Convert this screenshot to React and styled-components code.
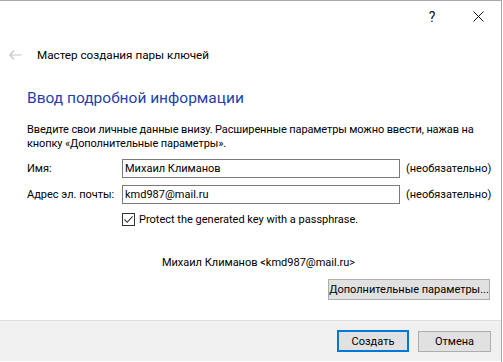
import React from "react";
import styled, { createGlobalStyle } from "styled-components";

const GlobalStyle = createGlobalStyle`
  * { box-sizing: border-box; }
  body {
    margin: 0;
    background: #ffffff;
    font-family: Roboto, "Liberation Sans", Arial, sans-serif;
    font-size: 11px;
    color: #000;
  }
`;

export default function App() {
  return (
    <>
      <GlobalStyle />
      <Window>
        <TitleBar>
          <CaptionButton>?</CaptionButton>
          <CaptionButton>
            <svg width="11" height="11" viewBox="0 0 11 11">
              <path d="M0.5 0.5 L10.5 10.5 M10.5 0.5 L0.5 10.5" stroke="#111" strokeWidth="1" fill="none" />
            </svg>
          </CaptionButton>
        </TitleBar>

        <HeaderRow>
          <BackIcon>
            <svg width="13" height="10" viewBox="0 0 13 10">
              <path d="M5 0.5 L0.8 5 L5 9.5 M0.8 5 H12.5" stroke="#c6c6c6" strokeWidth="1.2" fill="none" />
            </svg>
          </BackIcon>
          <WizardTitle>Мастер создания пары ключей</WizardTitle>
        </HeaderRow>

        <Content>
          <Heading>Ввод подробной информации</Heading>
          <Intro>
            Введите свои личные данные внизу. Расширенные параметры можно ввести, нажав на
            кнопку «Дополнительные параметры».
          </Intro>

          <FormGrid>
            <Label>Имя:</Label>
            <TextBox defaultValue="Михаил Климанов" />
            <Hint>(необязательно)</Hint>
            <Label>Адрес эл. почты:</Label>
            <TextBox defaultValue="kmd987@mail.ru" />
            <Hint>(необязательно)</Hint>
            <span />
            <CheckRow>
              <CheckBox>
                <svg width="11" height="11" viewBox="0 0 11 11">
                  <path d="M1.5 5.5 L4.2 8.3 L9.6 2.3" stroke="#333" strokeWidth="1.1" fill="none" />
                </svg>
              </CheckBox>
              Protect the generated key with a passphrase.
            </CheckRow>
          </FormGrid>

          <Summary>Михаил Климанов &lt;kmd987@mail.ru&gt;</Summary>
          <AdvancedRow>
            <Button width={162}>Дополнительные параметры...</Button>
          </AdvancedRow>
        </Content>

        <Footer>
          <Button primary width={72}>Создать</Button>
          <Button width={73}>Отмена</Button>
        </Footer>
      </Window>
    </>
  );
}

// - Styled Components - //
const Window = styled.div`
  width: 502px;
  height: 362px;
  background: #fff;
  border-top: 1px solid #a9a9a9;
  border-right: 1px solid #a9a9a9;
  display: flex;
  flex-direction: column;
  overflow: hidden;
`;

// Title bar
const TitleBar = styled.div`
  height: 31px;
  display: flex;
  justify-content: flex-end;
`;
const CaptionButton = styled.div`
  width: 46px;
  height: 31px;
  display: flex;
  justify-content: center;
  align-items: center;
  font-size: 14px;
  color: #111;
`;

// Wizard header
const HeaderRow = styled.div`
  height: 46px;
  display: flex;
  align-items: center;
  padding-left: 9px;
`;
const BackIcon = styled.div`
  width: 28px;
  display: flex;
  align-items: center;
`;
const WizardTitle = styled.div`
  font-size: 11.7px;
  color: #000;
`;

// Content
const Content = styled.div`
  flex: 1;
  padding: 0 11px 0 27px;
  display: flex;
  flex-direction: column;
`;
const Heading = styled.div`
  font-size: 15.5px;
  color: #1f3fad;
  line-height: 20px;
  margin-top: 10px;
`;
const Intro = styled.div`
  margin-top: 15px;
  line-height: 14px;
  letter-spacing: -0.12px;
`;
const FormGrid = styled.div`
  margin-top: 8px;
  display: grid;
  grid-template-columns: 89px 278px 85px;
  column-gap: 6px;
  row-gap: 7px;
  align-items: center;
`;
const Label = styled.div`
  white-space: nowrap;
`;
const TextBox = styled.input`
  height: 19px;
  border: 1px solid #7a7a7a;
  padding: 0 2px;
  font-family: inherit;
  font-size: 11px;
  color: #000;
  outline: none;
`;
const Hint = styled.div`
  white-space: nowrap;
`;
const CheckRow = styled.div`
  grid-column: 2 / 4;
  display: flex;
  align-items: center;
  gap: 4px;
  margin-top: 2px;
`;
const CheckBox = styled.div`
  width: 13px;
  height: 13px;
  border: 1px solid #333;
  display: flex;
  justify-content: center;
  align-items: center;
`;
const Summary = styled.div`
  margin-top: 30px;
  text-align: center;
`;
const AdvancedRow = styled.div`
  margin-top: 10px;
  display: flex;
  justify-content: flex-end;
`;
const Button = styled.button`
  height: ${(props) => (props.primary ? "22px" : "21px")};
  width: ${(props) => props.width}px;
  padding: 0;
  white-space: nowrap;
  background: #e1e1e1;
  border: ${(props) => (props.primary ? "2px solid #0078d7" : "1px solid #adadad")};
  font-family: inherit;
  font-size: 11px;
  color: #000;
`;

// Footer
const Footer = styled.div`
  height: 41px;
  margin-bottom: 1px;
  border-top: 1px solid #dfdfdf;
  background: #f0f0f0;
  display: flex;
  justify-content: flex-end;
  align-items: center;
  gap: 9px;
  padding-right: 10px;
`;
